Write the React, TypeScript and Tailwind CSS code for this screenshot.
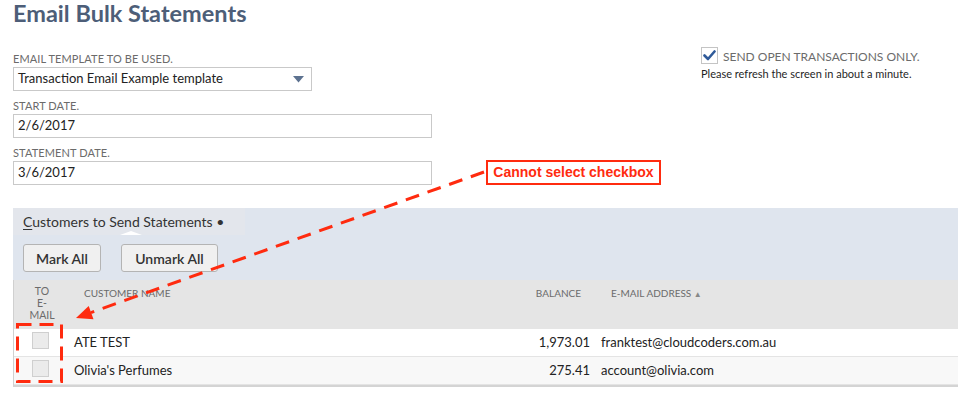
import React from "react";

const font = { fontFamily: "Lato, 'Open Sans', sans-serif" };

function FieldLabel({ children }: { children: React.ReactNode }) {
  return (
    <div className="h-[14px] text-[11px] leading-[14px] uppercase text-[#6b6b6b] tracking-[0.1px]">
      {children}
    </div>
  );
}

function Row({
  name,
  balance,
  email,
  shaded,
}: {
  name: string;
  balance: string;
  email: string;
  shaded?: boolean;
}) {
  return (
    <div
      className={`grid grid-cols-[56px_451px_75px_1fr] h-[28px] border-b border-[#e4e4e4] text-[13px] text-[#222] ${
        shaded ? "bg-[#f8f8f8]" : "bg-white"
      }`}
    >
      <div className="pl-[18px] pt-[3px]">
        <div className="w-[17px] h-[17px] bg-[#ebebeb] border border-[#cfcfcf]" />
      </div>
      <div className="pl-[4px] flex items-center">{name}</div>
      <div className="pr-[6px] flex items-center justify-end">{balance}</div>
      <div className="pl-[5px] flex items-center">{email}</div>
    </div>
  );
}

export default function App() {
  return (
    <div className="relative w-[958px] h-[400px] bg-white overflow-hidden" style={font}>
      {/* Title */}
      <h1 className="pl-[13px] pt-[1px] text-[23.5px] leading-[25px] font-bold text-[#4d5e78]">
        Email Bulk Statements
      </h1>

      {/* Form */}
      <div className="flex mt-[26px]">
        <div className="pl-[13px] w-[440px]">
          <FieldLabel>Email Template To Be Used.</FieldLabel>
          <div className="mt-[1px] w-[299px] h-[24px] border border-[#c9c9c9] flex items-center justify-between pl-[4px] pr-[7px] text-[13px] text-[#222]">
            <span>Transaction Email Example template</span>
            <svg width="11" height="7" viewBox="0 0 11 7">
              <polygon points="0,0 11,0 5.5,6.5" fill="#5d7290" />
            </svg>
          </div>

          <div className="mt-[8px]">
            <FieldLabel>Start Date.</FieldLabel>
          </div>
          <div className="mt-[1px] w-[419px] h-[24px] border border-[#c9c9c9] flex items-center pl-[4px] text-[13px] text-[#222]">
            2/6/2017
          </div>

          <div className="mt-[8px]">
            <FieldLabel>Statement Date.</FieldLabel>
          </div>
          <div className="mt-[1px] w-[419px] h-[24px] border border-[#c9c9c9] flex items-center pl-[4px] text-[13px] text-[#222]">
            3/6/2017
          </div>
        </div>

        <div className="ml-[261px] -mt-[5px]">
          <div className="flex items-end gap-[5px]">
            <div className="w-[17px] h-[17px] border border-[#c4c4c4] bg-white flex items-center justify-center">
              <svg width="13" height="11" viewBox="0 0 13 11">
                <path d="M1.5 5.5 L5 9 L11.5 1.5" fill="none" stroke="#2f5a99" strokeWidth="2.6" strokeLinecap="round" strokeLinejoin="round" />
              </svg>
            </div>
            <span className="text-[12px] leading-[14px] uppercase text-[#6b6b6b]">
              Send Open Transactions Only.
            </span>
          </div>
          <div className="mt-[3px] text-[11px] leading-[14px] text-[#1f1f1f]">
            Please refresh the screen in about a minute.
          </div>
        </div>
      </div>

      {/* Customers panel */}
      <div className="ml-[13px] mt-[23px] bg-[#dfe5ee]">
        <div className="relative w-[232px] h-[27px] bg-[#e3e6ec] flex items-center pl-[10px] text-[14px] text-[#333]">
          <span>
            <span className="underline underline-offset-2">C</span>ustomers to Send Statements •
          </span>
          <div className="absolute left-[107px] bottom-0 w-0 h-0 border-l-[11px] border-r-[11px] border-b-[4px] border-l-transparent border-r-transparent border-b-white" />
        </div>
        <div className="flex gap-[20px] pl-[10px] pt-[9px] pb-[8px]">
          <button className="h-[28px] w-[78px] rounded-[3px] border border-[#b4b4b4] bg-[#f0f0f0] text-[14px] font-semibold text-[#333]">
            Mark All
          </button>
          <button className="h-[28px] w-[97px] rounded-[3px] border border-[#b4b4b4] bg-[#f0f0f0] text-[14px] font-semibold text-[#333]">
            Unmark All
          </button>
        </div>
      </div>

      {/* Table */}
      <div className="ml-[13px] border-l border-[#d0d0d0] border-b-2 border-b-[#d4d4d4]">
        <div className="grid grid-cols-[56px_451px_75px_1fr] h-[49px] bg-[#e5e5e5] text-[10px] uppercase text-[#6b6b6b]">
          <div className="pt-[5px] text-center leading-[12px] text-[10.5px]">
            TO
            <br />
            E-
            <br />
            MAIL
          </div>
          <div className="pl-[14px] pt-[7px] leading-[12px]">Customer Name</div>
          <div className="pr-[15px] pt-[7px] leading-[12px] text-right">Balance</div>
          <div className="pl-[15px] pt-[7px] leading-[12px]">
            E-mail Address <span className="text-[8px] text-[#888]">▲</span>
          </div>
        </div>
        <Row name="ATE TEST" balance="1,973.01" email="franktest@cloudcoders.com.au" />
        <Row name="Olivia's Perfumes" balance="275.41" email="account@olivia.com" shaded />
      </div>

      {/* Annotations */}
      <svg className="absolute inset-0 pointer-events-none" width="958" height="400">
        <line x1="484" y1="172" x2="91" y2="312.6" stroke="#ff2b0f" strokeWidth="3" strokeDasharray="14 9" />
        <polygon points="76,318 93.5,319.2 88.7,306" fill="#ff2b0f" />
        <rect x="17.5" y="324.5" width="44" height="57" fill="none" stroke="#ff2b0f" strokeWidth="3" strokeDasharray="14 8" />
      </svg>
      <div
        className="absolute left-[486px] top-[160px] w-[175px] h-[25px] border-2 border-[#ff2b0f] bg-white flex items-center justify-center text-[14px] font-bold text-[#ff2b0f]"
        style={{ fontFamily: "'Liberation Sans', Arial, sans-serif" }}
      >
        Cannot select checkbox
      </div>
    </div>
  );
}
